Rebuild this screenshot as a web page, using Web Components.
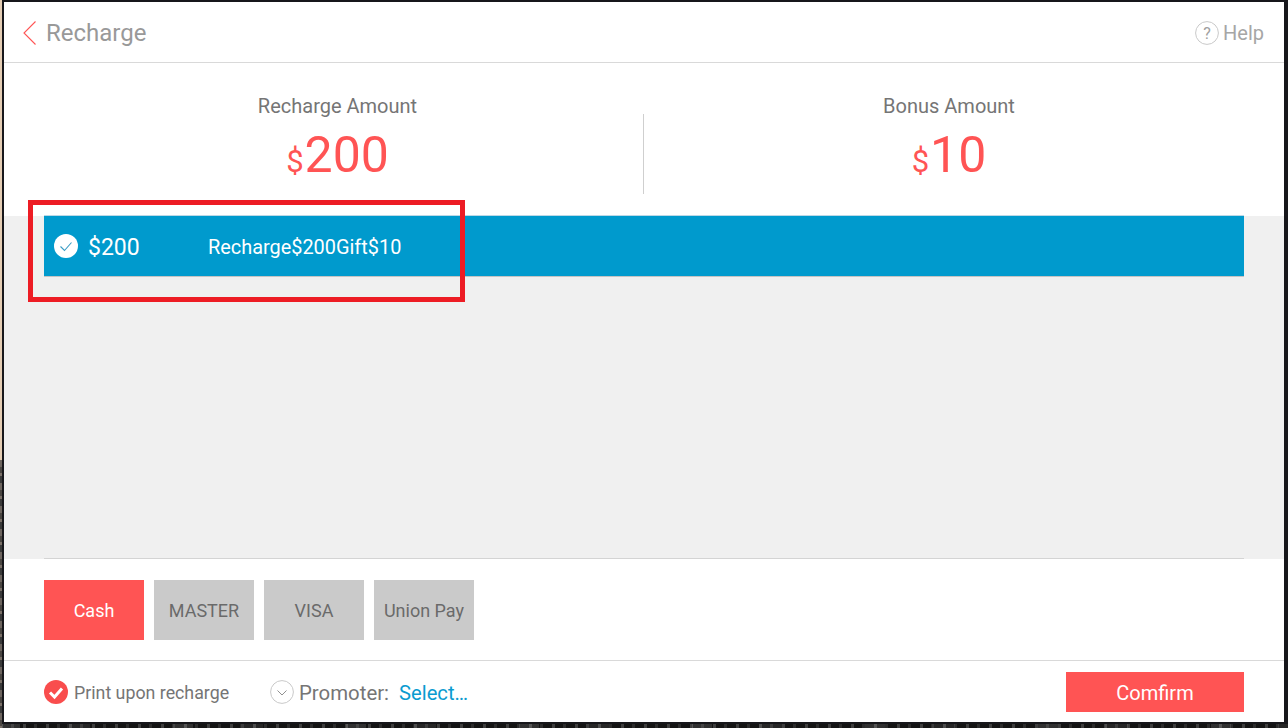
<!DOCTYPE html>
<html>
<head>
<meta charset="utf-8">
<style>
  html, body { margin: 0; height: 100%; }
  body { background: #17171b; font-family: Roboto, sans-serif; overflow: hidden; }
</style>
</head>
<body>
<recharge-app></recharge-app>

<script>
const define = (name, html) => {
  customElements.define(name, class extends HTMLElement {
    constructor() {
      super()
      this.attachShadow({ mode: 'open' }).innerHTML = html
    }
  })
}

define('top-bar', `
  <style>
    :host { display: flex; align-items: center; justify-content: space-between; box-sizing: border-box; height: 61px; border-bottom: 1px solid #d9d9d9; padding: 2px 20px 0 18px; background: #fff; }
    .left, .right { display: flex; align-items: center; }
    .title { font-size: 24px; color: #999; margin-left: 8px; }
    .help { font-size: 20px; color: #a6a6a6; margin-left: 4px; }
    svg { display: block; }
  </style>
  <div class="left">
    <svg width="16" height="26" viewBox="0 0 16 26"><path d="M13.5 1.5 2 13l11.5 11.5" fill="none" stroke="#ff5454" stroke-width="1.1"/></svg>
    <span class="title">Recharge</span>
  </div>
  <div class="right">
    <svg width="24" height="24" viewBox="0 0 24 24"><circle cx="12" cy="12" r="11.4" fill="none" stroke="#c9c9c9" stroke-width="1"/><text x="12" y="18" text-anchor="middle" font-family="Roboto" font-size="16" fill="#a0a0a0">?</text></svg>
    <span class="help">Help</span>
  </div>
`)

define('amount-box', `
  <style>
    :host { display: flex; flex-direction: column; align-items: center; flex: 1; }
    .label { font-size: 20px; line-height: 24px; color: #757575; }
    .value { color: #ff5454; font-size: 50px; line-height: 56px; margin-top: 9px; display: flex; align-items: baseline; }
    .cur { font-size: 31px; margin-right: 1px; }
  </style>
  <div class="label"><slot name="label"></slot></div>
  <div class="value"><span class="cur">$</span><slot name="value"></slot></div>
`)

define('amount-head', `
  <style>
    :host { display: flex; box-sizing: border-box; height: 153px; padding-top: 31px; background: #fff; }
    .sep { width: 1px; height: 80px; margin-top: 20px; background: #cfcfcf; flex: none; }
    .col { display: flex; box-sizing: border-box; }
    .a { width: 639px; padding-left: 28px; }
    .b { width: 640px; padding-right: 30px; }
  </style>
  <div class="col a"><slot name="a"></slot></div>
  <div class="sep"></div>
  <div class="col b"><slot name="b"></slot></div>
`)

define('plan-row', `
  <style>
    :host { display: flex; align-items: center; height: 60px; background: #009acd; border-top: 1px solid #bcd8e6; border-bottom: 1px solid #c4c4c4; color: #fff; margin-top: -1px; }
    .check { margin-left: 10px; display: block; }
    .price { font-size: 23px; margin-left: 10px; width: 120px; padding-top: 2px; }
    .desc { font-size: 19.9px; padding-top: 2px; }
  </style>
  <svg class="check" width="24" height="24" viewBox="0 0 24 24"><circle cx="12" cy="12" r="12" fill="#fff"/><path d="M6.5 12.500 10.500 16.500 17.500 8.500" fill="none" stroke="#3a9cc4" stroke-width="1.1"/></svg>
  <span class="price"><slot name="price"></slot></span>
  <span class="desc"><slot name="desc"></slot></span>
`)

define('pay-button', `
  <style>
    :host { display: flex; align-items: center; justify-content: center; width: 100px; height: 60px; background: #cacaca; color: #6a6a6a; font-size: 18px; }
    :host([active]) { background: #ff5454; color: #fff; }
  </style>
  <slot></slot>
`)

define('bottom-bar', `
  <style>
    :host { display: flex; align-items: center; box-sizing: border-box; height: 62px; border-top: 1px solid #d9d9d9; padding: 0 40px; background: #fff; }
    svg { display: block; flex: none; }
    span { padding-top: 2px; }
    .print { font-size: 17.8px; color: #757575; margin-left: 6px; width: 196px; }
    .promoter { font-size: 20.4px; color: #757575; margin-left: 5px; }
    .select { font-size: 20.2px; color: #0a9bd0; margin-left: 10px; }
    .confirm { margin-left: auto; width: 178px; height: 40px; padding-top: 2px; box-sizing: border-box; display: flex; align-items: center; justify-content: center; background: #ff5454; color: #fff; font-size: 20px; }
  </style>
  <svg width="24" height="24" viewBox="0 0 24 24"><circle cx="12" cy="12" r="12" fill="#f94d4d"/><path d="M6 12.500 10.500 17 18 8.500" fill="none" stroke="#fff" stroke-width="3"/></svg>
  <span class="print">Print upon recharge</span>
  <svg width="24" height="24" viewBox="0 0 24 24"><circle cx="12" cy="12" r="11.4" fill="#fff" stroke="#c9c9c9"/><path d="M7.500 10.500 12 15l4.500-4.500" fill="none" stroke="#909090"/></svg>
  <span class="promoter">Promoter:</span>
  <span class="select">Select…</span>
  <div class="confirm">Comfirm</div>
`)

define('recharge-app', `
  <style>
    :host { display: block; position: relative; box-sizing: border-box; width: 1288px; height: 728px; padding: 2px 4px 6px 4px; background:
      linear-gradient(#17171b 0 724px, transparent 724px),
      repeating-linear-gradient(90deg, rgba(255,255,255,.18) 0 3px, transparent 3px 11px, rgba(255,255,255,.1) 11px 14px, transparent 14px 23px),
      repeating-linear-gradient(90deg, rgba(255,255,255,.12) 0 20px, transparent 20px 67px, rgba(255,255,255,.08) 67px 90px, transparent 90px 173px),
      #141414; }
    .panel { display: flex; flex-direction: column; height: 720px; background: #fff; }
    /* bit of the desktop showing at the left edge */
    .strip { position: absolute; left: 0; top: 0; width: 2px; height: 460px; background: #e4cdb4; }
    .strip.low { top: 460px; height: 268px; background: repeating-linear-gradient(#6d655f 0 7px, #4a4642 7px 13px, #7a7068 13px 16px, #3a3a3a 16px 23px); }
    .list { flex: 1; background: #f0f0f0; padding: 0 40px; display: flex; flex-direction: column; }
    .spacer { flex: 1; }
    .line { height: 1px; background: #d4d4d4; }
    .pays { display: flex; gap: 10px; box-sizing: border-box; height: 101px; padding: 21px 40px 0; background: #fff; }
    .mark { position: absolute; left: 28px; top: 200px; width: 437px; height: 102px; box-sizing: border-box; border: 5px solid #ed1c24; }
  </style>
  <div class="strip"></div>
  <div class="strip low"></div>
  <div class="panel">
    <top-bar></top-bar>
    <amount-head>
      <amount-box slot="a"><span slot="label">Recharge Amount</span><span slot="value">200</span></amount-box>
      <amount-box slot="b"><span slot="label">Bonus Amount</span><span slot="value">10</span></amount-box>
    </amount-head>
    <div class="list">
      <plan-row><span slot="price">$200</span><span slot="desc">Recharge$200Gift$10</span></plan-row>
      <div class="spacer"></div>
      <div class="line"></div>
    </div>
    <div class="pays">
      <pay-button active>Cash</pay-button>
      <pay-button>MASTER</pay-button>
      <pay-button>VISA</pay-button>
      <pay-button>Union Pay</pay-button>
    </div>
    <bottom-bar></bottom-bar>
  </div>
  <div class="mark"></div>
`)
</script>
</body>
</html>
